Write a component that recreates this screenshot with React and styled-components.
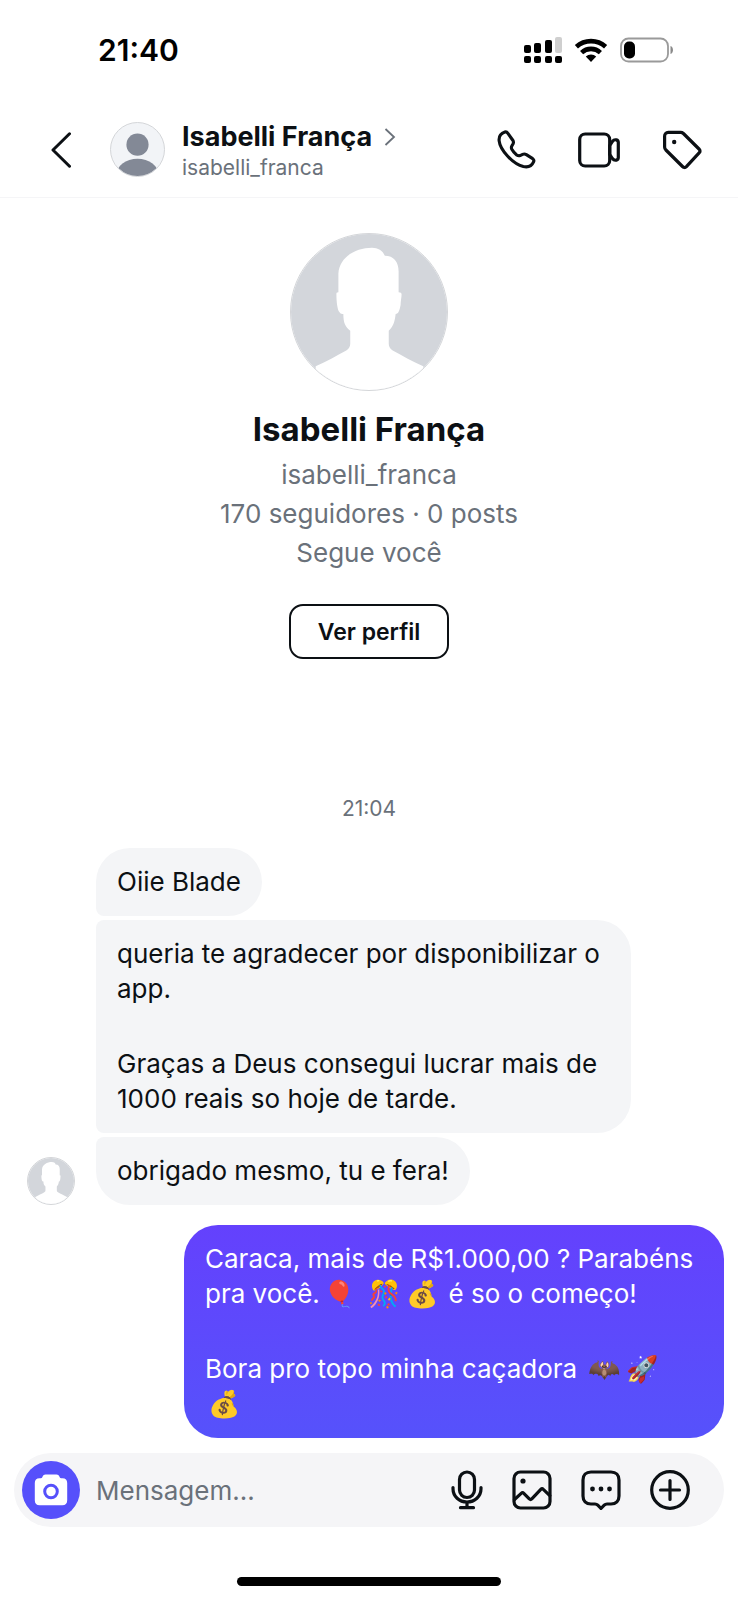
import styled, { createGlobalStyle } from "styled-components";

const incoming = [
  { id: 1, paragraphs: ["Oiie Blade"] },
  {
    id: 2,
    paragraphs: [
      "queria te agradecer por disponibilizar o app.",
      "Graças a Deus consegui lucrar mais de 1000 reais so hoje de tarde.",
    ],
  },
  { id: 3, paragraphs: ["obrigado mesmo, tu e fera!"] },
];

const SignalIcon = () => (
  <svg width="38" height="26" viewBox="0 0 38 26" aria-hidden="true">
    <g fill="#000">
      <rect x="0" y="8" width="7" height="8" rx="2" />
      <rect x="10" y="6" width="7" height="10" rx="2" />
      <rect x="21" y="3" width="7" height="13" rx="2" />
      <rect x="0" y="19" width="7" height="7" rx="2" />
      <rect x="10" y="19" width="7" height="7" rx="2" />
      <rect x="21" y="19" width="7" height="7" rx="2" />
      <rect x="31" y="19" width="7" height="7" rx="2" />
    </g>
    <rect x="31" y="0" width="7" height="16" rx="2" fill="#cfcfcf" />
  </svg>
);

const WifiIcon = () => (
  <svg width="34" height="24" viewBox="0 0 34 24" aria-hidden="true">
    <g fill="none" stroke="#000" strokeWidth="4.6">
      <path d="M2.4 8.8a21.5 21.5 0 0 1 29.2 0" />
      <path d="M7.6 14.6a13.8 13.8 0 0 1 18.8 0" />
    </g>
    <path d="M17 24l-5.2-5.4a7.6 7.6 0 0 1 10.4 0z" fill="#000" />
  </svg>
);

const BatteryIcon = () => (
  <svg width="54" height="26" viewBox="0 0 54 26" aria-hidden="true">
    <rect
      x="1"
      y="1.5"
      width="47"
      height="23"
      rx="7.5"
      fill="none"
      stroke="#9a9a9a"
      strokeWidth="1.8"
    />
    <rect x="4" y="4.5" width="11" height="17" rx="5" fill="#000" />
    <path d="M50.500 9c3.300 1 3.300 7 0 8z" fill="#8a8a8a" />
  </svg>
);

const BackIcon = () => (
  <svg width="20" height="36" viewBox="0 0 20 36" aria-hidden="true">
    <path
      d="M18.500 1.800L2 18l16.500 16.200"
      fill="none"
      stroke="#0c1014"
      strokeWidth="3"
      strokeLinecap="round"
      strokeLinejoin="round"
    />
  </svg>
);

const ChevronIcon = () => (
  <svg width="12" height="18" viewBox="0 0 12 18" aria-hidden="true">
    <path d="M1.500 1L10 9l-8.500 8" fill="none" stroke="#6a717a" strokeWidth="1.8" />
  </svg>
);

const PhoneIcon = () => (
  <Stroked width="39" height="39" viewBox="0 0 40 40" aria-hidden="true">
    <path d="M8.100 2C3.800 3.400 1.700 6.600 2.200 11.200c1 9.200 13.600 23.400 24.800 26.300 4.600 1 8.700-.6 10.500-4.700.6-1.400.4-2.500-.9-3.400l-6.500-4.100c-1.300-.8-2.500-.9-3.800-.3l-2.600 1.200c-1.300.4-2.400.2-3.500-.6-2.200-1.700-3.800-3.600-5-5.800-.6-1.200-.6-2.300 0-3.400l1.300-2.300c.6-1.300.5-2.400-.3-3.600L11 3.200C10.200 2 9.300 1.600 8.100 2z" />
  </Stroked>
);

const VideoIcon = () => (
  <Stroked width="42" height="40" viewBox="0 0 42 40" aria-hidden="true">
    <rect x="1.7" y="4" width="30" height="32" rx="5.5" />
    <path d="M31.700 15.600l2.700-4.200c1-1.300 2.600-1.900 4-1.500 1.300.4 1.900 1.400 1.900 2.700v14.800c0 1.300-.6 2.300-1.900 2.700-1.400.4-3-.2-4-1.500l-2.700-4.200z" />
  </Stroked>
);

const TagIcon = () => (
  <Stroked width="40" height="40" viewBox="0 0 40 40" aria-hidden="true">
    <path d="M2.600 6.200c0-2.200 1.400-3.800 3.600-3.800h12.400c1.100 0 2 .4 2.800 1.100L37 19c1.300 1.300 1.400 2.600.1 3.900L24.400 36.600c-1.300 1.300-2.600 1.200-3.900-.1L3.900 20c-.9-.8-1.300-1.700-1.300-2.900z" />
    <circle cx="12.2" cy="12" r="2.2" fill="#0c1014" stroke="none" />
  </Stroked>
);

const CameraIcon = () => (
  <svg width="34" height="32" viewBox="0 0 34 32" aria-hidden="true">
    <path
      d="M11.500.6h11c1.500 0 2.300.7 2.900 2l.3.700c.3.600.8.900 1.500.9h1.300c3.100 0 4.700 1.800 4.700 4.800v17.200c0 3.200-1.700 5-4.900 5H5.700c-3.200 0-4.900-1.800-4.900-5V9c0-3 1.600-4.800 4.700-4.800h1.300c.7 0 1.200-.3 1.500-.9l.3-.7c.6-1.300 1.400-2 2.900-2z"
      fill="#fff"
    />
    <circle cx="17" cy="17.5" r="6.3" fill="none" stroke="#5650fb" strokeWidth="3" />
  </svg>
);

const MicIcon = () => (
  <Stroked width="32" height="40" viewBox="0 0 32 40" aria-hidden="true">
    <rect x="8.5" y="2" width="15" height="25.5" rx="7.5" />
    <path d="M2 17.500v1.300c0 7.600 6.200 13.200 14 13.200s14-5.600 14-13.200v-1.300M16 32v5.500M9.500 37.700h13" />
  </Stroked>
);

const GalleryIcon = () => (
  <Stroked width="40" height="40" viewBox="0 0 40 40" aria-hidden="true">
    <rect x="2" y="2" width="36" height="36" rx="6.5" />
    <path d="M2.500 29.500l6.700-6.200c.9-.8 1.800-.8 2.600 0l5.500 5.600c.9.800 1.700.8 2.500 0l9-9.500c.8-.8 1.700-.8 2.500 0l6.500 6.200" />
    <circle cx="11" cy="11" r="2.6" fill="#0c1014" stroke="none" />
  </Stroked>
);

const StickerIcon = () => (
  <Stroked width="40" height="40" viewBox="0 0 40 40" aria-hidden="true">
    <path d="M10 2h20c5 0 8 3 8 8v16c0 5-3 8-8 8h-4c-1.200 0-2 .4-2.800 1.200L20 38.500l-3.200-3.300C16 34.400 15.200 34 14 34h-4c-5 0-8-3-8-8V10c0-5 3-8 8-8z" />
    <g fill="#0c1014" stroke="none">
      <circle cx="11.5" cy="19" r="2.4" />
      <circle cx="20" cy="19" r="2.4" />
      <circle cx="28.5" cy="19" r="2.4" />
    </g>
  </Stroked>
);

const PlusIcon = () => (
  <Stroked width="40" height="40" viewBox="0 0 40 40" aria-hidden="true">
    <circle cx="20" cy="20" r="18.3" />
    <path d="M20 10.500v19M10.500 20h19" />
  </Stroked>
);

const PersonIcon = () => (
  <svg viewBox="0 0 55 55" width="100%" height="100%" aria-hidden="true">
    <circle cx="27.5" cy="22.5" r="11.5" fill="#838996" />
    <ellipse cx="27.5" cy="54" rx="22" ry="17" fill="#838996" />
  </svg>
);

const Silhouette = () => (
  <svg viewBox="0 0 158 158" width="100%" height="100%" aria-hidden="true">
    <rect width="158" height="158" fill="#d3d6db" />
    <path
      d="M82 14C66 14 49 23 48 40v19c-2 0-2 1-2 2 0 7 1 16 3 18 1 2 3 2 4 2 0 9 2 13 7 17v13c0 3-1 5-4 7-9 5-20 11-31 16v24h109v-24c-11-5-22-11-31-16-3-2-4-4-4-7V98c4-4 6-8 7-17 3 0 4-4 5-9 0-4 1-8 1-11 0-1-1-2-3-2V38c0-10-5-16-14-16-2-5-7-8-13-8z"
      fill="#fff"
    />
  </svg>
);

const App = () => {
  return (
    <Screen>
      <GlobalStyle />
      <StatusBar>
        <Clock>21:40</Clock>
        <StatusIcons>
          <SignalIcon />
          <WifiIcon />
          <BatteryIcon />
        </StatusIcons>
      </StatusBar>

      <Header>
        <BackButton aria-label="Voltar">
          <BackIcon />
        </BackButton>
        <Avatar $size={55} $bg="#f2f4f7">
          <PersonIcon />
        </Avatar>
        <Contact href="#perfil">
          <ContactName>
            Isabelli França <ChevronIcon />
          </ContactName>
          <ContactHandle>isabelli_franca</ContactHandle>
        </Contact>
        <HeaderActions>
          <IconButton aria-label="Ligar">
            <PhoneIcon />
          </IconButton>
          <IconButton aria-label="Chamada de vídeo">
            <VideoIcon />
          </IconButton>
          <IconButton aria-label="Etiquetas">
            <TagIcon />
          </IconButton>
        </HeaderActions>
      </Header>

      <Thread>
        <Profile>
          <Avatar $size={158}>
            <Silhouette />
          </Avatar>
          <ProfileName>Isabelli França</ProfileName>
          <ProfileLine>isabelli_franca</ProfileLine>
          <ProfileLine>170 seguidores · 0 posts</ProfileLine>
          <ProfileLine>Segue você</ProfileLine>
          <ProfileButton>Ver perfil</ProfileButton>
        </Profile>

        <Timestamp>21:04</Timestamp>

        <IncomingGroup>
          <Avatar $size={48}>
            <Silhouette />
          </Avatar>
          <Bubbles>
            {incoming.map((message) => (
              <IncomingBubble key={message.id}>
                {message.paragraphs.map((text) => (
                  <p key={text}>{text}</p>
                ))}
              </IncomingBubble>
            ))}
          </Bubbles>
        </IncomingGroup>

        <OutgoingBubble>
          <p>
            Caraca, mais de R$1.000,00 ? Parabéns pra você.<Emoji>🎈</Emoji>{" "}
            <Emoji>🎊</Emoji>
            <Emoji>💰</Emoji> é so o começo!
          </p>
          <p>
            Bora pro topo minha caçadora <Emoji>🦇</Emoji>
            <Emoji>🚀</Emoji>
            <Emoji>💰</Emoji>
          </p>
        </OutgoingBubble>
      </Thread>

      <Composer>
        <CameraButton type="button" aria-label="Câmera">
          <CameraIcon />
        </CameraButton>
        <MessageInput type="text" placeholder="Mensagem..." aria-label="Mensagem" />
        <ComposerActions>
          <IconButton type="button" aria-label="Gravar áudio">
            <MicIcon />
          </IconButton>
          <IconButton type="button" aria-label="Galeria">
            <GalleryIcon />
          </IconButton>
          <IconButton type="button" aria-label="Figurinhas">
            <StickerIcon />
          </IconButton>
          <IconButton type="button" aria-label="Mais opções">
            <PlusIcon />
          </IconButton>
        </ComposerActions>
      </Composer>
      <HomeIndicator />
    </Screen>
  );
};

const GlobalStyle = createGlobalStyle`
  * {
    box-sizing: border-box;
    margin: 0;
    padding: 0;
  }

  body {
    background-color: #fff;
    color: #0c1014;
    font-family: Inter, "Liberation Sans", sans-serif;
  }

  button,
  input {
    font-family: inherit;
    border: none;
    background: none;
  }

  svg {
    display: block;
  }
`;

const Stroked = styled.svg`
  fill: none;
  stroke: #0c1014;
  stroke-width: 3.2;
  stroke-linecap: round;
  stroke-linejoin: round;
`;

const Screen = styled.div`
  display: flex;
  flex-direction: column;
  min-height: 100vh;
`;

const StatusBar = styled.div`
  display: flex;
  align-items: center;
  justify-content: space-between;
  height: 100px;
  padding: 0 64px 0 98px;
`;

const Clock = styled.span`
  font-size: 30px;
  font-weight: 600;
  color: #000;
`;

const StatusIcons = styled.div`
  display: flex;
  align-items: center;
  gap: 12px;
`;

const Header = styled.header`
  display: flex;
  align-items: center;
  height: 98px;
  padding: 2px 36px 0 51px;
  border-bottom: 1px solid #f5f5f7;
`;

const IconButton = styled.button`
  display: flex;
  cursor: pointer;
`;

const BackButton = styled(IconButton)`
  margin-right: 39px;
`;

const Avatar = styled.div`
  flex-shrink: 0;
  width: ${({ $size }) => $size}px;
  height: ${({ $size }) => $size}px;
  border: 1px solid #d4d6d9;
  border-radius: 50%;
  background-color: ${({ $bg }) => $bg || "#fff"};
  overflow: hidden;
`;

const Contact = styled.a`
  display: flex;
  flex-direction: column;
  padding-top: 4px;
  margin-left: 17px;
  color: inherit;
  text-decoration: none;
`;

const ContactName = styled.span`
  display: flex;
  align-items: center;
  gap: 12px;
  font-size: 27px;
  font-weight: 700;
  line-height: 32px;
`;

const ContactHandle = styled.span`
  font-size: 21px;
  line-height: 30px;
  color: #6a717a;
`;

const HeaderActions = styled.div`
  display: flex;
  align-items: center;
  gap: 42px;
  margin-left: auto;
`;

const Thread = styled.main`
  display: flex;
  flex: 1;
  flex-direction: column;
  padding: 35px 14px 12px 27px;
`;

const Profile = styled.section`
  display: flex;
  flex-direction: column;
  align-items: center;
  padding-right: 13px;
`;

const ProfileName = styled.h1`
  margin: 17px 0 5px;
  font-size: 33px;
  font-weight: 700;
  line-height: 42px;
`;

const ProfileLine = styled.p`
  font-size: 26px;
  line-height: 39px;
  color: #6a717a;
`;

const ProfileButton = styled.button`
  height: 55px;
  margin-top: 32px;
  padding: 0 27px;
  border: 2px solid #0c1014;
  border-radius: 14px;
  font-size: 23px;
  font-weight: 600;
  color: #0c1014;
  cursor: pointer;
`;

const Timestamp = styled.time`
  margin: 136px 13px 25px 0;
  font-size: 21px;
  line-height: 28px;
  text-align: center;
  color: #6a717a;
`;

const IncomingGroup = styled.div`
  display: flex;
  align-items: flex-end;
  gap: 21px;
`;

const Bubbles = styled.div`
  display: flex;
  flex: 1;
  flex-direction: column;
  align-items: flex-start;
  gap: 4px;
`;

const Bubble = styled.div`
  padding: 16px 21px 17px;
  border-radius: 34px;
  font-size: 26px;
  line-height: 35px;

  p + p {
    margin-top: 40px;
  }
`;

const IncomingBubble = styled(Bubble)`
  max-width: 535px;
  border-radius: 8px 34px 34px 8px;
  background-color: #f4f5f7;

  &:first-child {
    border-top-left-radius: 34px;
  }

  &:last-child {
    border-bottom-left-radius: 34px;
  }
`;

const OutgoingBubble = styled(Bubble)`
  align-self: flex-end;
  max-width: 540px;
  margin-top: 20px;
  padding-right: 28px;
  background: linear-gradient(#6441fd, #5652fb);
  color: #fff;
`;

const Emoji = styled.span`
  display: inline-block;
  width: 38px;
  font-size: 26px;
  line-height: 30px;
  text-align: center;
`;

const Composer = styled.form`
  display: flex;
  align-items: center;
  height: 74px;
  margin: 0 14px;
  padding: 0 34px 0 8px;
  border-radius: 37px;
  background-color: #f5f5f7;
`;

const CameraButton = styled(IconButton)`
  flex-shrink: 0;
  align-items: center;
  justify-content: center;
  width: 58px;
  height: 58px;
  border-radius: 50%;
  background-color: #5650fb;
`;

const MessageInput = styled.input`
  flex: 1;
  min-width: 0;
  margin: 0 16px;
  font-size: 26px;
  color: #0c1014;
  outline: none;

  &::placeholder {
    color: #6a717a;
    opacity: 1;
  }
`;

const ComposerActions = styled.div`
  display: flex;
  align-items: center;
  gap: 29px;
`;

const HomeIndicator = styled.div`
  width: 264px;
  height: 9px;
  margin: 50px auto 14px;
  border-radius: 5px;
  background-color: #000;
`;

export default App;
